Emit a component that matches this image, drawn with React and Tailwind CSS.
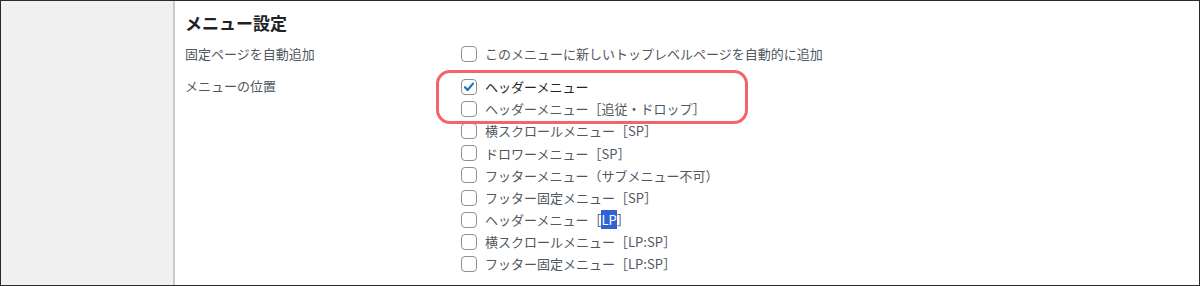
import React from "react";

const options = [
  { label: "ヘッダーメニュー", checked: true },
  { label: "ヘッダーメニュー［追従・ドロップ］" },
  { label: "横スクロールメニュー［SP］" },
  { label: "ドロワーメニュー［SP］" },
  { label: "フッターメニュー（サブメニュー不可）" },
  { label: "フッター固定メニュー［SP］" },
  { label: "ヘッダーメニュー［", mark: "LP", tail: "］" },
  { label: "横スクロールメニュー［LP:SP］" },
  { label: "フッター固定メニュー［LP:SP］" },
];

const Checkbox = ({ checked }) => (
  <span className="w-4 h-4 shrink-0 rounded-[4px] border border-[#8c8f94] bg-white flex items-center justify-center">
    {checked && (
      <svg width="14" height="14" viewBox="0 0 14 14" fill="none">
        <path d="M3 7.2l2.6 2.8L11 3.6" stroke="#2271b1" strokeWidth="2.2" strokeLinecap="round" strokeLinejoin="round" />
      </svg>
    )}
  </span>
);

const App = () => {
  return (
    <div
      className="w-[1200px] h-[286px] flex border border-[#2a2a2a] bg-white overflow-hidden"
      style={{ fontFamily: '"Noto Sans CJK JP", "Noto Sans", sans-serif' }}
    >
      {/* Left side panel */}
      <div className="w-[174px] h-full bg-[#f0f0f1] border-r-2 border-[#cbcbcb]"></div>

      {/* Content */}
      <div className="flex-1 relative pl-[10px] pt-[10px]">
        <h2 className="text-[17px] leading-[24px] h-[24px] font-bold text-[#1d2327]">メニュー設定</h2>

        <div className="flex mt-[8px] h-[22px] items-center">
          <div className="w-[276px] text-[13px] text-[#50575e]">固定ページを自動追加</div>
          <label className="flex items-center gap-2 text-[13px] text-[#50575e]">
            <Checkbox />
            <span>このメニューに新しいトップレベルページを自動的に追加</span>
          </label>
        </div>

        <div className="flex mt-[11px]">
          <div className="w-[276px] h-[20px] flex items-center text-[13px] text-[#50575e]">メニューの位置</div>
          <div className="flex flex-col">
            {options.map((o, i) => (
              <label key={i} className="h-[22.1px] flex items-center gap-2 text-[13px]">
                <Checkbox checked={o.checked} />
                <span className={o.checked ? "text-[#1d2327]" : "text-[#50575e]"}>
                  {o.label}
                  {o.mark && <span className="bg-[#2f62d3] text-white">{o.mark}</span>}
                  {o.tail}
                </span>
              </label>
            ))}
          </div>
        </div>

        {/* Red annotation outline */}
        <div className="absolute left-[261px] top-[69px] w-[312px] h-[54px] border-[3px] border-[#f7626a] rounded-[14px] pointer-events-none"></div>
      </div>
    </div>
  );
};

export default App;
